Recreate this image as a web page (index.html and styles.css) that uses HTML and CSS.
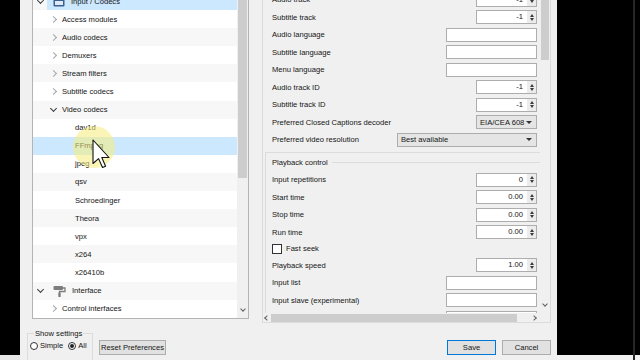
FILE: index.html
```html
<!DOCTYPE html>
<html lang="en">
  <head>
    <meta charset="UTF-8" />
    <title>Preferences</title>
    <link rel="stylesheet" href="styles.css">
  </head>
  <body>
    <div class="edge"></div>

    <div class="dialog">
      <div class="main">
        <!-- category tree -->
        <div class="tree-box">
          <ul class="tree">
            <li class="lv0"><span class="tw open"></span><span class="item sel"><svg class="ico" width="12" height="12" viewBox="0 0 12 12"><rect x="0.5" y="0.5" width="11" height="11" rx="1" fill="#3d5f8f"/><rect x="2" y="6" width="8" height="4" fill="#dfe9f5"/><rect x="3" y="2" width="2" height="2" fill="#dfe9f5"/></svg>Input / Codecs</span></li>
            <li class="lv1"><span class="tw"></span>Access modules</li>
            <li class="lv1"><span class="tw"></span>Audio codecs</li>
            <li class="lv1"><span class="tw"></span>Demuxers</li>
            <li class="lv1"><span class="tw"></span>Stream filters</li>
            <li class="lv1"><span class="tw"></span>Subtitle codecs</li>
            <li class="lv1"><span class="tw open"></span>Video codecs</li>
            <li class="lv2">dav1d</li>
            <li class="lv2 sel">FFmpeg</li>
            <li class="lv2">jpeg</li>
            <li class="lv2">qsv</li>
            <li class="lv2">Schroedinger</li>
            <li class="lv2">Theora</li>
            <li class="lv2">vpx</li>
            <li class="lv2">x264</li>
            <li class="lv2">x26410b</li>
            <li class="lv0"><span class="tw open"></span><span class="item"><svg class="ico" width="13" height="12" viewBox="0 0 13 12"><rect x="0.5" y="1" width="9.5" height="4" rx="1" fill="#7d7d7d"/><path d="M10 3 H12 V6.5 H6.5 V8" fill="none" stroke="#7d7d7d" stroke-width="1.3"/><rect x="5.3" y="7.5" width="2.4" height="4.5" rx="0.6" fill="#7d7d7d"/></svg>Interface</span></li>
            <li class="lv1"><span class="tw"></span>Control interfaces</li>
            <li class="lv1"><span class="tw"></span>Hotkeys settings</li>
          </ul>
          <div class="vbar">
            <div class="thumb tall"></div>
            <span class="arr down"></span>
          </div>
        </div>

        <!-- settings for the selected module -->
        <div class="settings">
          <div class="pane">
            <div class="rows">
              <div class="opt"><span>Audio track</span><span class="spin"><span class="val">-1</span><span class="btns"></span></span></div>
              <div class="opt"><span>Subtitle track</span><span class="spin"><span class="val">-1</span><span class="btns"></span></span></div>
              <div class="opt"><span>Audio language</span><span class="field"></span></div>
              <div class="opt"><span>Subtitle language</span><span class="field"></span></div>
              <div class="opt"><span>Menu language</span><span class="field"></span></div>
              <div class="opt"><span>Audio track ID</span><span class="spin"><span class="val">-1</span><span class="btns"></span></span></div>
              <div class="opt"><span>Subtitle track ID</span><span class="spin"><span class="val">-1</span><span class="btns"></span></span></div>
              <div class="opt"><span>Preferred Closed Captions decoder</span><span class="combo narrow">EIA/CEA 608<span class="drop"></span></span></div>
              <div class="opt"><span>Preferred video resolution</span><span class="combo wide">Best available<span class="drop"></span></span></div>

              <div class="group">
                <div class="group-title">Playback control</div>
                <div class="opt"><span>Input repetitions</span><span class="spin"><span class="val">0</span><span class="btns"></span></span></div>
                <div class="opt"><span>Start time</span><span class="spin"><span class="val">0.00</span><span class="btns"></span></span></div>
                <div class="opt"><span>Stop time</span><span class="spin"><span class="val">0.00</span><span class="btns"></span></span></div>
                <div class="opt"><span>Run time</span><span class="spin"><span class="val">0.00</span><span class="btns"></span></span></div>
                <div class="opt check"><span class="box"></span><span>Fast seek</span></div>
                <div class="opt"><span>Playback speed</span><span class="spin"><span class="val">1.00</span><span class="btns"></span></span></div>
                <div class="opt"><span>Input list</span><span class="field"></span></div>
                <div class="opt"><span>Input slave (experimental)</span><span class="field"></span></div>
                <div class="opt"><span>Bookmarks list for a stream</span><span class="field"></span></div>
              </div>
            </div>
          </div>
          <div class="vbar right">
            <div class="thumb short"></div>
            <span class="arr down"></span>
          </div>
          <div class="hbar">
            <span class="arr left"></span>
            <div class="hthumb"></div>
            <span class="arr next"></span>
          </div>
          <div class="corner"></div>
        </div>
      </div>

      <div class="footer">
        <fieldset class="show">
          <legend>Show settings</legend>
          <div class="radios">
            <span class="radio"></span><span>Simple</span>
            <span class="radio on"></span><span>All</span>
          </div>
        </fieldset>
        <button class="btn reset">Reset Preferences</button>
        <div class="actions">
          <button class="btn save">Save</button>
          <button class="btn cancel">Cancel</button>
        </div>
      </div>
    </div>

    <div class="backdrop"><div class="rim"></div></div>

    <!-- mouse pointer with click highlight -->
    <div class="pointer">
      <svg width="46" height="48" viewBox="0 0 46 48">
        <circle cx="21" cy="21" r="21" fill="#f6ec7a" fill-opacity="0.55"/>
        <path d="M20 14 L20 37.5 L25.6 32.6 L29.5 41.5 L32.6 40.2 L28.8 31.5 L36 31.5 Z" fill="#fff" stroke="#111" stroke-width="1.1" stroke-linejoin="round"/>
      </svg>
    </div>
  </body>
</html>
```

FILE: styles.css
```css
* {
  box-sizing: border-box;
}

body {
  margin: 0;
  width: 640px;
  height: 360px;
  overflow: hidden;
  position: relative;
  display: flex;
  background-color: #000;
  font-family: "Liberation Sans", Arial, sans-serif;
  font-size: 7.6px;
  color: #141414;
}

/* black around the window, a strip of the desktop at the bottom */
.edge {
  width: 20px;
  background: linear-gradient(#000 355px, #e6e6e6 355px);
}
.backdrop {
  flex: 1;
  display: flex;
  justify-content: flex-end;
  padding-right: 5px;
  background: linear-gradient(#000 355px, #f2f2f2 355px);
}
.rim {
  width: 2px;
  background-color: #262626;
}

.dialog {
  width: 537px;
  height: 360px;
  display: flex;
  flex-direction: column;
  background-color: #f0f0f0;
}

.main {
  display: flex;
  height: 323px;
}

/* ---------- tree ---------- */
.tree-box {
  margin: -1px 0 0 12px;
  width: 217px;
  height: 320px;
  display: flex;
  overflow: hidden;
  border: 1px solid #b4b4b4;
  background-color: #fff;
}

.tree {
  flex: 1;
  list-style: none;
  margin: -8px 0 0;
  padding: 0;
}

.tree li {
  height: 18.1px;
  display: flex;
  align-items: center;
  white-space: nowrap;
  background-color: #fff;
}
.tree li:nth-child(odd) {
  background-color: #f7f7f7;
}
.tree li.sel {
  background-color: #cce8ff;
}

.lv0 {
  padding-left: 2px;
}
.lv1 {
  padding-left: 15px;
}
.lv1 .tw {
  margin-right: 4px;
}
.lv2 {
  padding-left: 42px;
}

.item {
  flex: 1;
  height: 100%;
  display: flex;
  align-items: center;
  gap: 6px;
  margin-left: 2px;
  padding-left: 6px;
}
.item.sel {
  background-color: #cce8ff;
}

/* expand / collapse chevrons */
.tw {
  width: 10px;
  display: flex;
  justify-content: center;
}
.tw::before {
  content: "";
  width: 4px;
  height: 4px;
  border-right: 1px solid #a6a6a6;
  border-bottom: 1px solid #a6a6a6;
  transform: rotate(-45deg);
}
.tw.open::before {
  border-color: #3a3a3a;
  transform: translateY(-1px) rotate(45deg);
}

/* ---------- scrollbars ---------- */
.vbar {
  width: 11px;
  display: flex;
  flex-direction: column;
  align-items: center;
  background-color: #f0f0f0;
}
.vbar.right {
  width: auto;
}
.thumb {
  width: 9px;
  background-color: #cdcdcd;
}
.thumb.tall {
  height: 178px;
}
.thumb.short {
  width: 8px;
  height: 60px;
}
.vbar .arr {
  margin-top: auto;
  margin-bottom: 7px;
}

.arr::before {
  content: "";
  display: block;
  width: 3px;
  height: 3px;
  border-right: 1px solid #606060;
  border-bottom: 1px solid #606060;
}
.arr.down::before {
  transform: rotate(45deg);
}
.arr.left::before {
  transform: rotate(135deg);
}
.arr.next::before {
  transform: rotate(-45deg);
}

.hbar {
  display: flex;
  align-items: center;
  background-color: #f0f0f0;
}
.hbar .arr.left {
  width: 8px;
  display: flex;
  justify-content: center;
}
.hthumb {
  width: 246px;
  height: 8px;
  background-color: #cdcdcd;
}
.hbar .arr.next {
  margin-left: 15px;
}
.corner {
  background-color: #f0f0f0;
}

/* ---------- settings pane ---------- */
.settings {
  margin: -1px 0 0 13px;
  width: 289px;
  height: 324px;
  display: grid;
  grid-template-columns: 1fr 10px;
  grid-template-rows: 1fr 9px;
  overflow: hidden;
  border: 1px solid #dcdcdc;
}

.pane {
  overflow: hidden;
  padding: 0 3px 0 9px;
}
.rows {
  margin-top: -9.25px;
}

.opt {
  height: 17.5px;
  display: flex;
  align-items: center;
  justify-content: space-between;
  white-space: nowrap;
}
.opt.check {
  height: 15.5px;
  justify-content: flex-start;
  gap: 4px;
}

.group {
  margin: 3.75px -3px 0 -7px;
  padding-left: 6px;
  border-top: 1px solid #dcdcdc;
  border-left: 1px solid #dcdcdc;
}
.group .opt {
  margin-right: 3px;
}
.group-title {
  height: 18px;
  display: flex;
  align-items: center;
  gap: 4px;
}
.group-title::after {
  content: "";
  flex: 1;
  border-top: 1px solid #dcdcdc;
}

.spin {
  width: 61px;
  height: 14px;
  display: flex;
  border: 1px solid #adadad;
  background-color: #fff;
}
.spin .val {
  flex: 1;
  text-align: right;
  padding-right: 4px;
  line-height: 12px;
}
.spin .btns {
  width: 9px;
  display: flex;
  flex-direction: column;
  align-items: center;
  justify-content: center;
  gap: 1px;
  background-color: #ececec;
}
.spin .btns::before,
.spin .btns::after {
  content: "";
  border-left: 2.5px solid transparent;
  border-right: 2.5px solid transparent;
}
.spin .btns::before {
  border-bottom: 3px solid #3c3c3c;
}
.spin .btns::after {
  border-top: 3px solid #3c3c3c;
}

.field {
  width: 91px;
  height: 14px;
  border: 1px solid #adadad;
  background-color: #fff;
}

.combo {
  height: 14px;
  display: flex;
  align-items: center;
  justify-content: space-between;
  padding: 0 4px 0 3px;
  border: 1px solid #adadad;
  background-color: #e5e5e5;
}
.combo.narrow {
  width: 61px;
}
.combo.wide {
  width: 140px;
}
.drop {
  border-left: 3px solid transparent;
  border-right: 3px solid transparent;
  border-top: 3px solid #333;
}

.box {
  width: 10px;
  height: 10px;
  border: 1px solid #333;
  background-color: #fff;
}

/* ---------- footer ---------- */
.footer {
  height: 37px;
  display: flex;
  align-items: flex-start;
  padding: 0 6px 0 7px;
}

.show {
  width: 66px;
  height: 40px;
  margin: 6px 0 0;
  padding: 0 0 0 2px;
  border: 1px solid #dcdcdc;
  white-space: nowrap;
}
.show legend {
  margin-left: 4px;
  padding: 0 1px;
}
.radios {
  display: flex;
  align-items: center;
  gap: 2px;
  margin-top: 3px;
}
.radio {
  width: 8px;
  height: 8px;
  display: flex;
  align-items: center;
  justify-content: center;
  border: 1px solid #333;
  border-radius: 50%;
  background-color: #fff;
}
.radio.on {
  margin-left: 3px;
}
.radio.on::after {
  content: "";
  width: 4px;
  height: 4px;
  border-radius: 50%;
  background-color: #222;
}

.btn {
  height: 15px;
  padding: 0;
  display: flex;
  align-items: center;
  justify-content: center;
  white-space: nowrap;
  font-family: inherit;
  font-size: 7.6px;
  color: #141414;
  border: 1px solid #adadad;
  background-color: #e1e1e1;
}
.reset {
  width: 67px;
  margin: 17px 0 0 6px;
}
.actions {
  display: flex;
  gap: 6px;
  margin: 17px 0 0 auto;
}
.save,
.cancel {
  width: 49px;
}
.save {
  border-color: #0078d7;
}

/* pointer drawn over the tree */
.pointer {
  position: absolute;
  left: 73px;
  top: 126px;
}
```
